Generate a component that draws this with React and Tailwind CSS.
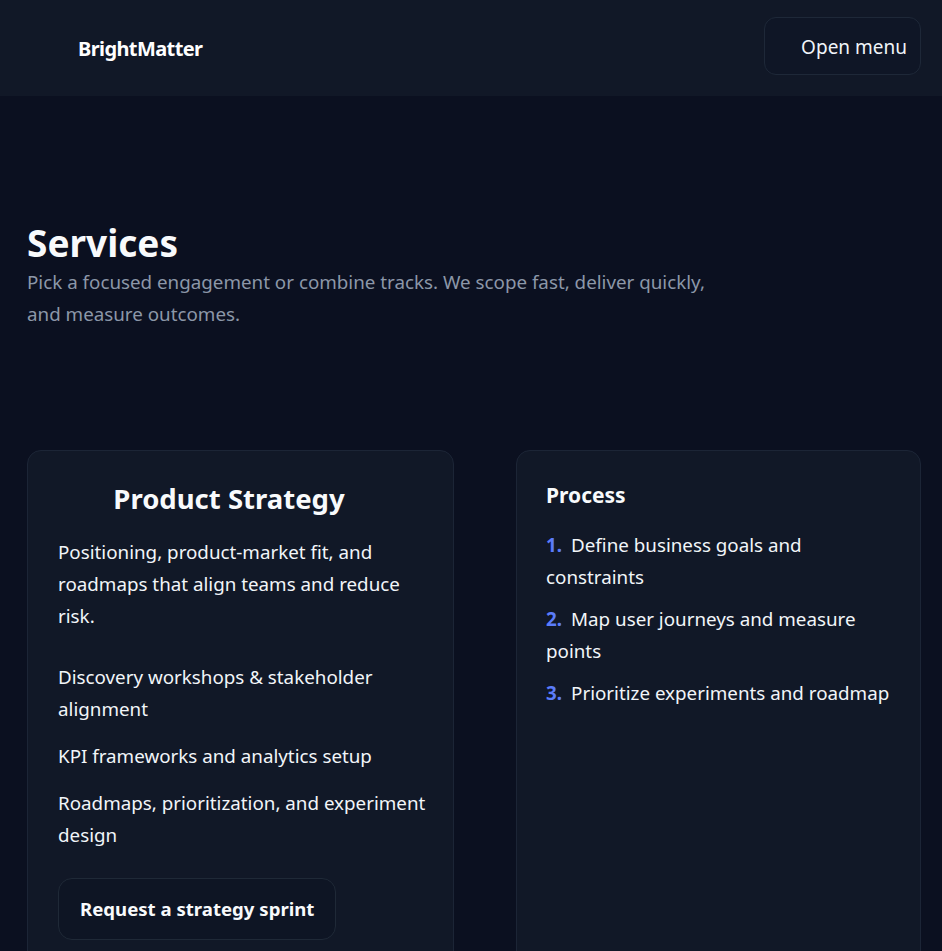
import React from 'react';

const steps = [
    'Define business goals and constraints',
    'Map user journeys and measure points',
    'Prioritize experiments and roadmap',
];

const features = [
    'Discovery workshops & stakeholder alignment',
    'KPI frameworks and analytics setup',
    'Roadmaps, prioritization, and experiment design',
];

const App = () => {
    return (
        <div className="min-h-screen bg-[#0b1020] text-white" style={{ fontFamily: '"Noto Sans", "Open Sans", sans-serif' }}>
            {/* Top bar */}
            <header className="h-[96px] bg-[#111827] flex items-start justify-between pl-[78px] pr-[21px]">
                <span className="mt-[34px] text-[20px] leading-[30px] font-bold tracking-[-0.03em]">BrightMatter</span>
                <button className="mt-[17px] h-[58px] pt-[3px] pl-[36px] pr-[13px] rounded-[12px] border border-[#1e2838] bg-[#0f1626] text-[19px] text-[#f1f5f9]">
                    Open menu
                </button>
            </header>

            <main className="pl-[27px] pr-[21px]">
                <section className="pt-[124px]">
                    <h1 className="text-[37px] leading-[46px] font-bold text-[#f8fafc]">Services</h1>
                    <p className="max-w-[690px] text-[18.8px] leading-[32px] text-[#8c97a8]">
                        Pick a focused engagement or combine tracks. We scope fast, deliver quickly, and measure outcomes.
                    </p>
                </section>

                <div className="mt-[120px] grid grid-cols-[427px_1fr] gap-[62px]">
                    {/* Service card */}
                    <div className="rounded-[14px] border border-[#1c2536] bg-[#111827] pl-[30px] pr-[20px] pt-[30px] pb-[40px]">
                        <h2 className="text-center pr-[33px] text-[27.5px] leading-[36px] font-bold text-[#f8fafc]">Product Strategy</h2>
                        <p className="mt-[19px] pr-[10px] text-[18.8px] leading-[32px] text-[#f1f5f9]">
                            Positioning, product-market fit, and roadmaps that align teams and reduce risk.
                        </p>
                        <ul className="mt-[29px] flex flex-col gap-[15px]">
                            {features.map((f) => (
                                <li key={f} className="text-[18.8px] leading-[32px] text-[#f1f5f9]">{f}</li>
                            ))}
                        </ul>
                        <button className="mt-[27px] h-[62px] px-[21px] rounded-[14px] border border-[#1f2937] bg-[#0e1524] text-[18.6px] font-bold text-[#f8fafc]">
                            Request a strategy sprint
                        </button>
                    </div>

                    {/* Process card */}
                    <div className="rounded-[14px] border border-[#1c2536] bg-[#111827] px-[29px] pt-[29px] pb-[40px]">
                        <h3 className="text-[21px] leading-[30px] font-bold text-[#f8fafc]">Process</h3>
                        <ol className="mt-[19px] flex flex-col gap-[10px]">
                            {steps.map((s, i) => (
                                <li key={s} className="text-[18.8px] leading-[32px] text-[#f1f5f9]">
                                    <span className="font-bold text-[#5b7cfa] mr-[9px]">{i + 1}.</span>
                                    {s}
                                </li>
                            ))}
                        </ol>
                    </div>
                </div>
            </main>
        </div>
    );
};

export default App;
